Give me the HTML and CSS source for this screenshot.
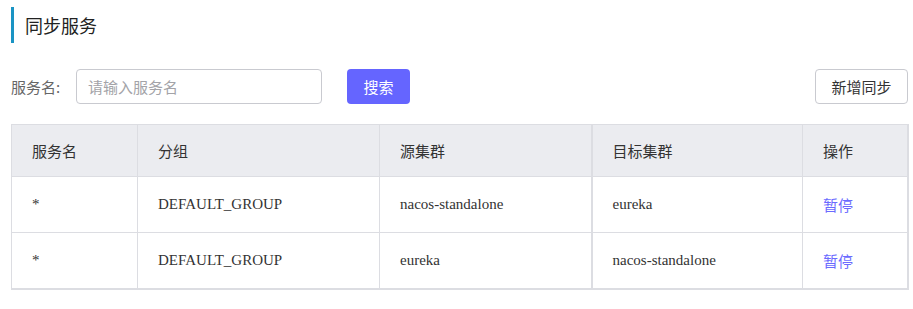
FILE: index.html
```html
<!DOCTYPE html>
<html lang="zh">
<head>
<meta charset="utf-8">
<title>同步服务</title>
<link rel="stylesheet" href="styles.css">
</head>
<body>
<div class="page">
  <h2 class="title">同步服务</h2>
  <div class="toolbar">
    <label class="label" for="svc">服务名:</label>
    <input id="svc" class="input" type="text" placeholder="请输入服务名">
    <button class="btn btn-primary">搜索</button>
    <div class="spacer"></div>
    <button class="btn btn-default">新增同步</button>
  </div>
  <table class="grid">
    <colgroup>
      <col class="c1"><col class="c2"><col class="c3"><col class="c4"><col class="c5">
    </colgroup>
    <thead>
      <tr><th>服务名</th><th>分组</th><th>源集群</th><th class="thick">目标集群</th><th>操作</th></tr>
    </thead>
    <tbody>
      <tr><td>*</td><td>DEFAULT_GROUP</td><td>nacos-standalone</td><td class="thick">eureka</td><td><a class="link" href="#">暂停</a></td></tr>
      <tr><td>*</td><td>DEFAULT_GROUP</td><td>eureka</td><td class="thick">nacos-standalone</td><td><a class="link" href="#">暂停</a></td></tr>
    </tbody>
  </table>
</div>
</body>
</html>
```
FILE: styles.css
```css
* { box-sizing: border-box; }
body {
  margin: 0;
  background: #fff;
  font-family: "Noto Sans CJK SC", "Noto Sans", sans-serif;
  color: #333;
}
.page {
  padding: 7px 5px 0 11px;
}
.title {
  margin: 0;
  height: 36px;
  line-height: 36px;
  border-left: 3px solid #1a94c4;
  padding-left: 11px;
  font-size: 18px;
  font-weight: normal;
  color: #222;
}
.toolbar {
  display: flex;
  align-items: center;
  margin-top: 26px;
  height: 35px;
}
.label {
  font-size: 15px;
  color: #666;
  width: 65px;
}
.input {
  width: 246px;
  height: 35px;
  border: 1px solid #c9cad0;
  border-radius: 4px;
  padding: 0 11px;
  font-family: "Noto Sans CJK SC", sans-serif;
  font-size: 15px;
  color: #333;
  outline: none;
}
.input::placeholder { color: #a3a3a8; }
.btn {
  height: 35px;
  border-radius: 4px;
  font-family: "Noto Sans CJK SC", sans-serif;
  font-size: 15px;
  cursor: pointer;
  padding: 0;
}
.btn-primary {
  margin-left: 25px;
  width: 63px;
  background: #6565ff;
  border: none;
  color: #fff;
}
.spacer { flex: 1; }
.btn-default {
  width: 93px;
  background: #fff;
  border: 1px solid #c9cad0;
  color: #333;
}
.grid {
  margin-top: 20px;
  width: 897px;
  border-collapse: collapse;
  table-layout: fixed;
  border: 1px solid #dcdde2;
  border-bottom: 2px solid #dcdde2;
  border-right: 2px solid #dcdde2;
}
.c1 { width: 126px; }
.c2 { width: 242px; }
.c3 { width: 212px; }
.c4 { width: 211px; }
.c5 { width: 105px; }
.grid th, .grid td {
  text-align: left;
  padding: 0 0 0 20px;
  border: 1px solid #dcdde2;
}
.grid th.thick, .grid td.thick { border-left: 2px solid #dcdde2; }
.grid th {
  height: 52px;
  background: #ebecf0;
  font-weight: normal;
  font-size: 15px;
  color: #333;
}
.grid td {
  height: 56px;
  font-family: "Liberation Serif", "Noto Sans CJK SC", serif;
  font-size: 15px;
  color: #333;
}
.link {
  font-family: "Noto Sans CJK SC", sans-serif;
  color: #6b6bff;
  text-decoration: none;
}
```
